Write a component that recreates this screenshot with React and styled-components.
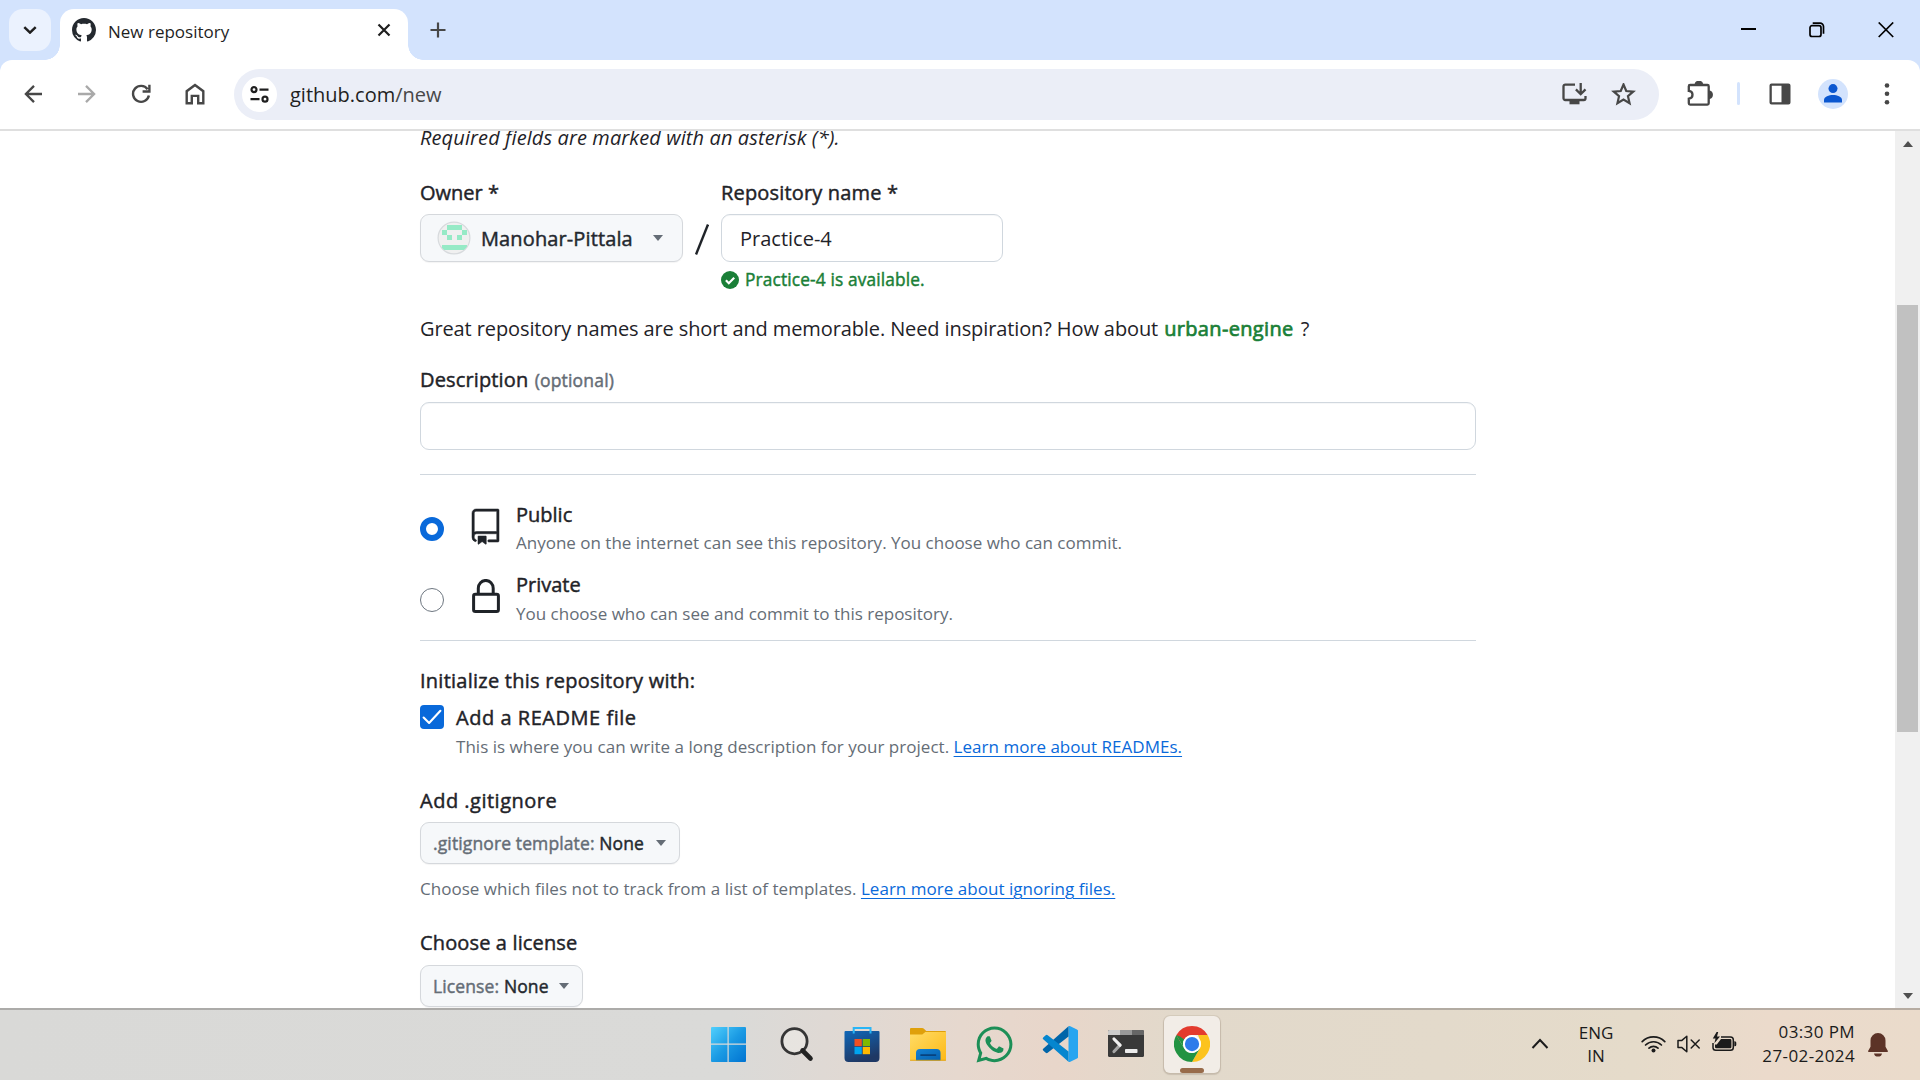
import React from "react";
import styled, { createGlobalStyle, css } from "styled-components";
import { FaWhatsapp } from "react-icons/fa";

const GlobalStyle = createGlobalStyle`
  * { box-sizing: border-box; }
  body {
    margin: 0;
    overflow: hidden;
    background: #fff;
    font-family: "Open Sans", "Noto Sans", sans-serif;
    color: #1f2328;
  }
  svg { display: block; flex: none; }
`;

const Screen = styled.div`
  width: 1920px;
  height: 1080px;
  display: flex;
  flex-direction: column;
  overflow: hidden;
`;

/* ---------- browser chrome ---------- */

const TabStrip = styled.header`
  height: 60px;
  flex: none;
  display: flex;
  align-items: flex-start;
  padding-left: 9px;
  background: #d3e3fd;
`;

const TabSearch = styled.button`
  width: 42px;
  height: 42px;
  margin: 9px 9px 0 0;
  padding: 0;
  border: 0;
  border-radius: 14px;
  background: #ebf2fe;
  display: flex;
  align-items: center;
  justify-content: center;
`;

const Tab = styled.div`
  position: relative;
  width: 348px;
  height: 51px;
  margin-top: 9px;
  padding: 0 17px 9px 12px;
  display: flex;
  align-items: center;
  background: #fff;
  border-radius: 14px 14px 0 0;

  &::before,
  &::after {
    content: "";
    position: absolute;
    bottom: 0;
    width: 15px;
    height: 15px;
  }
  &::before {
    left: -15px;
    background: radial-gradient(circle at 0 0, transparent 14.5px, #fff 15px);
  }
  &::after {
    right: -15px;
    background: radial-gradient(circle at 100% 0, transparent 14.5px, #fff 15px);
  }
`;

const TabTitle = styled.span`
  flex: 1;
  margin-left: 12px;
  padding-top: 4px;
  font-size: 17px;
  line-height: 24px;
  color: #1f1f1f;
`;

const NewTab = styled.div`
  margin: 22px 0 0 22px;
`;

const WindowButtons = styled.div`
  margin-left: auto;
  height: 60px;
  display: flex;
`;

const WindowButton = styled.div`
  width: ${(p) => p.$w}px;
  padding-top: 22px;
  display: flex;
  justify-content: center;
`;

const ToolbarBack = styled.div`
  flex: none;
  background: #d3e3fd;
`;

const Toolbar = styled.div`
  height: 71px;
  padding: 0 5px 2px 6px;
  display: flex;
  align-items: center;
  background: #fff;
  border-bottom: 2px solid #dfdfdf;
  border-radius: 12px 12px 0 0;
`;

const ToolButton = styled.div`
  width: ${(p) => p.$w || 54}px;
  height: 42px;
  display: flex;
  align-items: center;
  justify-content: center;
`;

const Omnibox = styled.div`
  width: 1425px;
  height: 51px;
  margin: 2px 14px 0 12px;
  padding: 0 23px 0 8px;
  display: flex;
  align-items: center;
  border-radius: 26px;
  background: #ebeef7;
`;

const SiteInfo = styled.div`
  width: 35px;
  height: 35px;
  border-radius: 50%;
  background: #fff;
  display: flex;
  align-items: center;
  justify-content: center;
`;

const Url = styled.span`
  flex: 1;
  margin-left: 13px;
  font-size: 20px;
  line-height: 30px;
  color: #1f1f1f;
  span { color: #474747; }
`;

const OmniActions = styled.div`
  display: flex;
  gap: 24px;
`;

const Separator = styled.div`
  width: 3px;
  height: 23px;
  margin: 0 20px 0 10px;
  border-radius: 2px;
  background: #d3e3fd;
`;

const Profile = styled.div`
  width: 30px;
  height: 30px;
  margin: 0 13px 0 18px;
  border-radius: 50%;
  background: #d3e3fd;
  display: flex;
  align-items: center;
  justify-content: center;
`;

/* ---------- page ---------- */

const Viewport = styled.div`
  height: 877px;
  flex: none;
  display: flex;
  overflow: hidden;
`;

const Page = styled.main`
  flex: 1;
  padding-left: 420px;
`;

const Form = styled.form`
  width: 1056px;
  margin-top: -8px;
  display: flex;
  flex-direction: column;
  align-items: flex-start;
`;

const medium = css`
  -webkit-text-stroke: 0.45px currentColor;
`;

const Line = styled.div`
  height: 30px;
  margin-top: ${(p) => p.$top || 0}px;
  font-size: 20px;
  line-height: 30px;
  white-space: pre;
  letter-spacing: ${(p) => p.$ls || 0}px;
  font-style: ${(p) => (p.$italic ? "italic" : "normal")};
  ${(p) => p.$strong && medium}
`;

const Caption = styled.div`
  height: 24px;
  margin-top: ${(p) => p.$top || 0}px;
  font-size: 17px;
  line-height: 24px;
  white-space: pre;
  color: #656d76;
  letter-spacing: ${(p) => p.$ls || 0}px;
`;

const Link = styled.a`
  color: #0969da;
  text-decoration: underline;
  text-decoration-thickness: 1px;
  text-underline-offset: 3px;
`;

const Optional = styled.span`
  margin-left: 1px;
  font-size: 17.5px;
  color: #656d76;
  letter-spacing: 0.18px;
`;

const Suggestion = styled.span`
  margin: 0 2px 0 1px;
  color: #1a7f37;
  letter-spacing: 0.33px;
  -webkit-text-stroke: 0.7px currentColor;
`;

const FieldRow = styled.div`
  margin-top: 25px;
  display: flex;
  align-items: flex-start;
`;

const Field = styled.div`
  display: flex;
  flex-direction: column;
  align-items: flex-start;
`;

const Slash = styled.svg`
  width: 14px;
  height: 31px;
  margin: 46px 12px 0;
`;

const SelectButton = styled.div`
  width: ${(p) => p.$w}px;
  height: ${(p) => (p.$large ? 48 : 42)}px;
  margin-top: ${(p) => p.$top || 6}px;
  padding: 0 ${(p) => (p.$large ? 19 : 13)}px 0 ${(p) => (p.$large ? 16 : 12)}px;
  display: flex;
  align-items: center;
  justify-content: space-between;
  border: 1px solid #d5d8dc;
  border-radius: 9px;
  background: #f6f8fa;
  box-shadow: 0 1px 1px rgba(31, 35, 40, 0.05);
`;

const SelectText = styled.span`
  flex: 1;
  font-size: ${(p) => (p.$large ? 20 : 17.5)}px;
  margin-left: ${(p) => (p.$large ? 10 : 0)}px;
  padding-top: ${(p) => (p.$large ? 2 : 0)}px;
  line-height: 30px;
  color: ${(p) => (p.$large ? "#24292f" : "#656d76")};
  letter-spacing: 0.12px;
  white-space: nowrap;
  ${medium}
  b {
    font-weight: 400;
    color: #24292f;
  }
`;

const Caret = styled.span`
  border: 5.5px solid transparent;
  border-top: 6px solid #656d76;
  border-bottom: 0;
`;

const Input = styled.div`
  width: ${(p) => p.$w}px;
  height: 48px;
  margin-top: ${(p) => p.$top}px;
  padding-left: 18px;
  border: 1px solid #d0d7de;
  border-radius: 9px;
  box-shadow: inset 0 1px 0 rgba(208, 215, 222, 0.2);
  font-size: 20px;
  line-height: 48px;
`;

const Available = styled.div`
  height: 24px;
  margin-top: 6px;
  display: flex;
  align-items: center;
  gap: 6px;
  font-size: 17.3px;
  line-height: 24px;
  color: #1a7f37;
  letter-spacing: 0.15px;
  ${medium}
`;

const Rule = styled.div`
  width: 1056px;
  height: 1px;
  margin-top: ${(p) => p.$top}px;
  background: #d0d7de;
`;

const Choice = styled.label`
  height: 58px;
  margin-top: ${(p) => p.$top}px;
  display: flex;
  align-items: flex-start;
`;

const Radio = styled.span`
  width: 24px;
  height: 24px;
  margin: ${(p) => (p.$on ? 17 : 18)}px 28px 0 0;
  border-radius: 50%;
  background: #fff;
  border: ${(p) => (p.$on ? "6px solid #0969da" : "1px solid #6e7781")};
`;

const ChoiceIcon = styled.span`
  width: 28px;
  margin: ${(p) => p.$top}px 16px 0 0;
`;

const CheckRow = styled.label`
  margin-top: 7px;
  display: flex;
  align-items: flex-start;
  gap: 12px;
`;

const Checkbox = styled.span`
  width: 24px;
  height: 24px;
  margin-top: 2px;
  border-radius: 4px;
  background: #0969da;
`;

const Scrollbar = styled.aside`
  width: 25px;
  display: flex;
  flex-direction: column;
  align-items: center;
  background: #f0f0f0;
`;

const ScrollArrow = styled.span`
  margin: ${(p) => (p.$up ? "10px 0 0" : "auto 0 9px")};
  border: 5.5px solid transparent;
  ${(p) => (p.$up ? "border-top: 0; border-bottom: 6px solid #505050;" : "border-bottom: 0; border-top: 6px solid #505050;")}
`;

const ScrollThumb = styled.span`
  width: 21px;
  height: 427px;
  margin-top: 158px;
  background: #c1c1c1;
`;

/* ---------- taskbar ---------- */

const Taskbar = styled.footer`
  height: 72px;
  flex: none;
  display: flex;
  border-top: 2px solid rgba(110, 108, 105, 0.42);
  background-clip: border-box;
  background-origin: border-box;
  background-image: linear-gradient(
    94deg,
    #d9d9d7 0%,
    #dadad8 38%,
    #dfd9d4 43%,
    #e6d8ce 50%,
    #e8d6ca 55%,
    #e2d9cb 61%,
    #e3dacb 75%,
    #e5dbca 85%,
    #ebdacb 92%,
    #eadbcb 100%
  );
`;

const Apps = styled.nav`
  padding: 16px 0 0 711px;
  display: flex;
  gap: 30px;
`;

const App36 = styled.div`
  width: 36px;
  height: 36px;
  color: ${(p) => p.$color || "inherit"};

  &:first-child { margin-right: 1px; }
`;

const ActiveApp = styled.div`
  width: 56px;
  height: 57px;
  margin: -10px 0 0 -10px;
  padding-top: 10px;
  display: flex;
  flex-direction: column;
  align-items: center;
  justify-content: space-between;
  border-radius: 6px;
  background: #f2ede7;
  box-shadow: 0 0 0 1px rgba(190, 175, 160, 0.3), 0 1px 1px 1px rgba(150, 135, 120, 0.3);
`;

const ActiveMark = styled.span`
  width: 24px;
  height: 5px;
  border-radius: 3px;
  background: #986b4a;
`;

const Tray = styled.div`
  margin-left: auto;
  padding-right: 32px;
  display: flex;
  color: #1b1b1b;
`;

const TrayIcon = styled.div`
  margin: ${(p) => p.$top}px ${(p) => p.$right}px 0 0;
`;

const TrayText = styled.div`
  width: ${(p) => p.$w}px;
  margin: ${(p) => p.$top}px ${(p) => p.$right}px 0 0;
  font-size: 17px;
  line-height: ${(p) => p.$lh}px;
  letter-spacing: ${(p) => p.$ls || 0}px;
  text-align: ${(p) => p.$align};
  white-space: nowrap;
`;

/* ---------- drawings ---------- */

const Octocat = () => (
  <svg width="24" height="24" viewBox="0 0 16 16" fill="#24292f">
    <path d="M8 0c4.42 0 8 3.58 8 8a8.013 8.013 0 0 1-5.45 7.59c-.4.08-.55-.17-.55-.38 0-.27.01-1.13.01-2.2 0-.75-.25-1.23-.54-1.48 1.78-.2 3.65-.88 3.65-3.95 0-.88-.31-1.59-.82-2.15.08-.2.36-1.02-.08-2.12 0 0-.67-.22-2.2.82-.64-.18-1.32-.27-2-.27-.68 0-1.36.09-2 .27-1.53-1.03-2.2-.82-2.2-.82-.44 1.1-.16 1.92-.08 2.12-.51.56-.82 1.28-.82 2.15 0 3.06 1.86 3.75 3.64 3.95-.23.2-.44.55-.51 1.07-.46.21-1.61.55-2.33-.66-.15-.24-.6-.83-1.23-.82-.67.01-.27.38.01.53.34.19.73.9.82 1.13.16.45.68 1.31 2.69.94 0 .67.01 1.3.01 1.49 0 .21-.15.45-.55.38A7.995 7.995 0 0 1 0 8c0-4.42 3.58-8 8-8Z" />
  </svg>
);

const Arrow = ({ color, flip }) => (
  <svg width="18" height="18" viewBox="0 0 18 18" fill="none" stroke={color} strokeWidth="2.3">
    <path d={flip ? "M0 9h16M8 .9 16.1 9 8 17.1" : "M18 9H2M10 .9 1.9 9l8.1 8.1"} />
  </svg>
);

const Reload = () => (
  <svg width="20" height="20" viewBox="0 0 20 20" fill="none" stroke="#474747" strokeWidth="2.4">
    <path d="M16.6 5.2A8 8 0 1 0 17.9 11.5M18.4.8v6.7h-6.8" />
  </svg>
);

const Home = () => (
  <svg width="20" height="22" viewBox="0 0 20 22" fill="none" stroke="#474747" strokeWidth="2.4">
    <path d="M1.7 20.3V8.2L10 2l8.3 6.2v12.1h-5.1v-7.4H6.8v7.4Z" />
  </svg>
);

const Tune = () => (
  <svg width="19" height="17" viewBox="0 0 19 17" fill="none" stroke="#1f1f1f" strokeWidth="2.2">
    <circle cx="4" cy="3.6" r="2.5" />
    <path d="M9.5 3.6h9M.5 13.2h9" />
    <circle cx="15" cy="13.2" r="2.5" />
  </svg>
);

const Install = () => (
  <svg width="25" height="22" viewBox="0 0 25 22" fill="none" stroke="#474747" strokeWidth="2.3">
    <path d="M13 1.6H3.2a1.7 1.7 0 0 0-1.7 1.7v12A1.7 1.7 0 0 0 3.2 17h18.6a1.7 1.7 0 0 0 1.7-1.7V13" />
    <path d="M18.7 0v10.5M13.9 6.4l4.8 4.8 4.8-4.8" />
    <path d="M7.5 19.500h10" strokeWidth="3.6" />
  </svg>
);

const Star = () => (
  <svg width="25" height="24" viewBox="0 1.5 25 24" fill="none" stroke="#474747" strokeWidth="2.2">
    <path d="m12.500 3 2.750 6.500 7 .6-5.300 4.600 1.600 6.900-6.050-3.650L6.450 21.600l1.600-6.900-5.300-4.600 7-.6Z" />
  </svg>
);

const Puzzle = () => (
  <svg width="26" height="26" viewBox="0 0.5 26 26" fill="none" stroke="#474747" strokeWidth="2.3">
    <path d="M1.800 5.800a1.300 1.300 0 0 1 1.300-1.300h17.300a1.300 1.300 0 0 1 1.300 1.300v17a1.300 1.300 0 0 1-1.300 1.300H3.100a1.300 1.300 0 0 1-1.300-1.300v-4.600c2.600-.3 3.700-2 3.700-3.900s-1.100-3.600-3.700-3.900Z" />
    <path d="M8.700 3.800a3.300 3.300 0 0 1 6.400 0ZM22.300 11.100a3.300 3.300 0 0 1 0 6.400Z" fill="#474747" />
  </svg>
);

const SidePanel = () => (
  <svg width="22" height="22" viewBox="0 0 22 22">
    <path fill="#474747" fillRule="evenodd" d="M2.500.5h17a2 2 0 0 1 2 2v17a2 2 0 0 1-2 2h-17a2 2 0 0 1-2-2v-17a2 2 0 0 1 2-2ZM2.800 2.800v16.400h9.700V2.800Z" />
  </svg>
);

const Person = () => (
  <svg width="18" height="19" viewBox="0 0 18 19" fill="#0b57d0">
    <circle cx="9" cy="4.6" r="4.5" />
    <path d="M0 18.500v-2.400c0-3.200 5-5 9-5s9 1.800 9 5v2.400Z" />
  </svg>
);

const Dots = () => (
  <svg width="6" height="22" viewBox="0 0 6 22" fill="#474747">
    <circle cx="3" cy="2.5" r="2.3" />
    <circle cx="3" cy="10.8" r="2.3" />
    <circle cx="3" cy="19.2" r="2.3" />
  </svg>
);

const cells = [[1, 0], [2, 0], [3, 0], [0, 1], [4, 1], [1, 2], [3, 2], [0, 4], [1, 4], [2, 4], [3, 4], [4, 4]];

const Identicon = () => (
  <svg width="34" height="34" viewBox="0 0 34 34">
    <clipPath id="avatar"><circle cx="17" cy="17" r="15.5" /></clipPath>
    <circle cx="17" cy="17" r="15.9" fill="#f0f0f0" stroke="#d7dadd" strokeWidth="1.2" />
    <g clipPath="url(#avatar)" fill="#96eac6" shapeRendering="crispEdges">
      {cells.map(([x, y]) => (
        <rect key={`${x}-${y}`} x={4.5 + x * 5} y={4 + y * 5} width="5" height="5" />
      ))}
    </g>
  </svg>
);

const CheckCircle = () => (
  <svg width="18" height="18" viewBox="0 0 18 18">
    <circle cx="9" cy="9" r="9" fill="#1a7f37" />
    <path d="m4.900 9.300 2.900 2.900 5.400-5.500" fill="none" stroke="#fff" strokeWidth="2.2" />
  </svg>
);

const Repo = () => (
  <svg width="36" height="36" viewBox="3 0 24 24" fill="#1f2328" stroke="#1f2328" strokeWidth="0.35" overflow="visible">
    <path d="M3 2.750A2.750 2.750 0 0 1 5.750 0h14.500a.750.750 0 0 1 .750.750v20.500a.750.750 0 0 1-.750.750h-6a.750.750 0 0 1 0-1.500h5.250v-4H6A1.500 1.500 0 0 0 4.500 18v.750c0 .716.430 1.334 1.050 1.605a.750.750 0 0 1-.6 1.374A3.251 3.251 0 0 1 3 18.750ZM19.500 1.500H5.750c-.690 0-1.250.560-1.250 1.250v12.651A2.989 2.989 0 0 1 6 15h13.500Z" />
    <path d="M7 18.250a.250.250 0 0 1 .250-.250h5a.250.250 0 0 1 .250.250v5.010a.250.250 0 0 1-.397.201l-2.206-1.604a.250.250 0 0 0-.294 0L7.397 23.460a.250.250 0 0 1-.397-.200v-5.010Z" />
  </svg>
);

const Lock = () => (
  <svg width="28" height="34" viewBox="0 0 28 34" fill="none" stroke="#1f2328" strokeWidth="3">
    <rect x="1.6" y="15.2" width="24.800" height="17.300" rx="1.8" />
    <path d="M6.300 15V9.200a7.400 7.700 0 0 1 14.900 0V15" />
  </svg>
);

const Tick = () => (
  <svg width="24" height="24" viewBox="0 0 24 24" fill="none" stroke="#fff" strokeWidth="2.1">
    <path d="m3.600 12.600 5.500 5.400L20.400 5.800" strokeLinecap="round" strokeLinejoin="round" />
  </svg>
);

const Windows = () => (
  <svg width="36" height="36" viewBox="0.5 0 36 36">
    <defs>
      <linearGradient id="win" x1="0" y1="0" x2="1" y2="1">
        <stop offset="0" stopColor="#51d0fd" />
        <stop offset=".5" stopColor="#1b9be4" />
        <stop offset="1" stopColor="#0073d1" />
      </linearGradient>
    </defs>
    <path fill="url(#win)" d="M1.500 1H17v16.500H.5V2a1 1 0 0 1 1-1ZM18.200 1H34.500a1 1 0 0 1 1 1v15.500H18.200ZM.5 18.700H17v17.300H1.500a1 1 0 0 1-1-1ZM18.200 18.700h17.300V35a1 1 0 0 1-1 1H18.200Z" />
  </svg>
);

const Search = () => (
  <svg width="36" height="36" viewBox="0 0 36 36" fill="none">
    <circle cx="16.5" cy="15.2" r="12.6" fill="#f4f1ee" fillOpacity=".45" stroke="#353535" strokeWidth="2.8" />
    <path d="m24.500 24.500 8 8" stroke="#222" strokeWidth="4.6" strokeLinecap="round" />
  </svg>
);

const Store = () => (
  <svg width="36" height="36" viewBox="0 0 36 36">
    <defs>
      <linearGradient id="store" x1="0" y1="0" x2=".4" y2="1">
        <stop offset="0" stopColor="#0f67b8" />
        <stop offset="1" stopColor="#1f3864" />
      </linearGradient>
    </defs>
    <path d="M.5 6a1 1 0 0 1 1-1h33a1 1 0 0 1 1 1v26a4 4 0 0 1-4 4h-27a4 4 0 0 1-4-4Z" fill="url(#store)" />
    <path d="M9.700 7.500V2h16.800v5.500" fill="none" stroke="#29b5f6" strokeWidth="2" />
    <path fill="#f25022" d="M10.500 13h7.300v7.200h-7.300z" />
    <path fill="#7fba00" d="M18.700 13H26v7.200h-7.300z" />
    <path fill="#00a4ef" d="M10.500 21h7.300v7.200h-7.300z" />
    <path fill="#ffb900" d="M18.700 21H26v7.200h-7.300z" />
  </svg>
);

const Folder = () => (
  <svg width="36" height="36" viewBox="0 0 36 36">
    <defs>
      <linearGradient id="folder" x1="0" y1="0" x2="1" y2="1">
        <stop offset="0" stopColor="#ffdc67" />
        <stop offset="1" stopColor="#fdb915" />
      </linearGradient>
      <linearGradient id="folderBlue" x1="0" y1="0" x2="1" y2="1">
        <stop offset="0" stopColor="#1482d4" />
        <stop offset="1" stopColor="#0560ae" />
      </linearGradient>
    </defs>
    <path d="M0 3a1 1 0 0 1 1-1h11a3 3 0 0 1 2.200 1l2 2H35a1 1 0 0 1 1 1v8H0Z" fill="#dfa00b" />
    <path d="M0 8.500h12.300l3-2.500H36v27.500a1 1 0 0 1-1 1H1a1 1 0 0 1-1-1Z" fill="url(#folder)" />
    <path d="M6 34.500V27a4 4 0 0 1 4-4h16.500a4 4 0 0 1 4 4v7.500Z" fill="url(#folderBlue)" />
    <path d="M11 29.100h14.500" stroke="#07427e" strokeWidth="1.7" strokeLinecap="round" />
    <path d="M0 34.300h36" stroke="#dfa00b" strokeWidth=".8" />
  </svg>
);

const WhatsApp = styled(FaWhatsapp)`
  width: 41px;
  height: 41px;
  margin: -2.5px;
`;

const VSCode = () => (
  <svg width="36" height="36" viewBox="0 0 36 36">
    <path d="M26.500.3 36 4.800v26.400l-9.500 4.500Z" fill="#27a5f0" />
    <path d="M26.500.3 1.200 22.700a1.200 1.200 0 0 0 0 1.800l2.500 2.200a1.600 1.600 0 0 0 2 .1L26.500 10.500Z" fill="#0065a9" />
    <path d="M26.500 35.700 1.200 13.300a1.200 1.200 0 0 1 0-1.800l2.500-2.200a1.600 1.600 0 0 1 2-.1l20.800 16.300Z" fill="#0586cf" />
    <path d="M26.500.3a2 2 0 0 1 1.800 0L35 3.500a2 2 0 0 1 1 1.800v25.400a2 2 0 0 1-1 1.800l-6.700 3.200a2 2 0 0 1-1.800 0c.5-.2.700-.7.700-1.300V1.600c0-.6-.2-1.100-.7-1.300Z" fill="#27a5f0" />
  </svg>
);

const Terminal = () => (
  <svg width="36" height="36" viewBox="0 0 36 36">
    <rect y="4" width="36" height="27" rx="1.5" fill="#393939" />
    <path d="M0 9V5.500A1.500 1.500 0 0 1 1.500 4H12v5Z" fill="#cbcbcb" />
    <path d="M12 4h12v5H12z" fill="#999" />
    <path d="M24 4h10.500A1.500 1.500 0 0 1 36 5.500V9H24Z" fill="#666" />
    <path d="m12 19.200-6 6.300" fill="none" stroke="#a5a5a5" strokeWidth="3.2" strokeLinecap="round" />
    <path d="m6 13 6 6.200" fill="none" stroke="#f0f0f0" strokeWidth="3.2" strokeLinecap="round" />
    <rect x="17" y="23" width="12.5" height="4" rx=".8" fill="#ececec" />
  </svg>
);

const Chrome = () => (
  <svg width="36" height="36" viewBox="0 0 48 48">
    <path d="M44.800 12A24 24 0 0 1 24 48l10.400-18A12 12 0 0 0 34.400 18L32 12Z" fill="#fcc31e" />
    <path d="M24 48A24 24 0 0 1 3.200 12l10.400 18A12 12 0 0 0 27 35.600L34.400 30Z" fill="#229342" />
    <path d="M3.200 12A24 24 0 0 1 24 0a24 24 0 0 1 20.800 12H24A12 12 0 0 0 13.600 18L8 20.300Z" fill="#e33b2e" />
    <path d="M3.200 12 13.600 30A12 12 0 0 1 13.600 18L8 14Z" fill="#229342" />
    <circle cx="24" cy="24" r="12" fill="#fff" />
    <circle cx="24" cy="24" r="9.5" fill="#2f7bea" />
  </svg>
);

const Wifi = () => (
  <svg width="25" height="18" viewBox="0 0 25 18" fill="none" stroke="#1b1b1b" strokeWidth="1.7" strokeLinecap="round">
    <path d="M1.200 6.600a16 16 0 0 1 22.600 0M4.600 10a11.200 11.200 0 0 1 15.800 0M8 13.200a6.400 6.400 0 0 1 9 0" />
    <circle cx="12.5" cy="15.6" r="2" fill="#1b1b1b" stroke="none" />
  </svg>
);

const Muted = () => (
  <svg width="24" height="18" viewBox="0 0 24 18" fill="none" stroke="#1b1b1b" strokeWidth="1.5" strokeLinejoin="round">
    <path d="M1 5.600h3.600l5.200-4.400v15.600l-5.200-4.400H1Z" />
    <path d="m14.200 5 8 8M22.200 5l-8 8" strokeLinecap="round" />
  </svg>
);

const Battery = () => (
  <svg width="25" height="20" viewBox="0 0 25 20">
    <path d="M9 5h9.500a2.800 2.800 0 0 1 2.800 2.800v7.600a2.800 2.800 0 0 1-2.800 2.800H3.800A2.800 2.800 0 0 1 1 15.400V11" fill="none" stroke="#1b1b1b" strokeWidth="1.5" />
    <path d="M9 7h9.200a1.200 1.200 0 0 1 1.200 1.200V15a1.200 1.200 0 0 1-1.200 1.200H4.200A1.200 1.200 0 0 1 3 15v-2.500h1.800Z" fill="#1b1b1b" />
    <path d="M22.300 9.200h.5a1.500 1.500 0 0 1 1.500 1.500v2a1.500 1.500 0 0 1-1.500 1.500h-.5Z" fill="#1b1b1b" />
    <path d="M4.600 0 .8 6.600h2.700L2.400 11.200 8 4.500H5L6.200 0Z" fill="#1b1b1b" />
  </svg>
);

const Bell = () => (
  <svg width="20" height="24" viewBox="0 0 20 24" fill="#5c3327">
    <path d="M10 0a7.500 7.500 0 0 1 7.500 7.500v6.300l2.400 4.100c.2.600-.1 1-.7 1H.8c-.6 0-.9-.4-.7-1l2.400-4.100V7.500A7.500 7.500 0 0 1 10 0ZM6 20.400h8a4.100 4.100 0 0 1-8 0Z" />
  </svg>
);

export default function App() {
  return (
    <Screen>
      <GlobalStyle />
      <TabStrip>
        <TabSearch>
          <svg width="14" height="8" viewBox="0 0 14 8" fill="none" stroke="#1f1f1f" strokeWidth="2.5">
            <path d="m1.300 1.200 5.700 5.400 5.700-5.400" />
          </svg>
        </TabSearch>
        <Tab>
          <Octocat />
          <TabTitle>New repository</TabTitle>
          <svg width="14" height="14" viewBox="0 0 14 14" fill="none" stroke="#1f1f1f" strokeWidth="2.2">
            <path d="m1.500 1.500 11 11M12.500 1.500l-11 11" />
          </svg>
        </Tab>
        <NewTab>
          <svg width="16" height="16" viewBox="0 0 16 16" stroke="#474747" strokeWidth="2.2">
            <path d="M8 .5v15M.5 8h15" />
          </svg>
        </NewTab>
        <WindowButtons>
          <WindowButton $w={68}>
            <svg width="16" height="16"><path d="M0 6h15v2H0z" fill="#000" /></svg>
          </WindowButton>
          <WindowButton $w={68}>
            <svg width="16" height="16" viewBox="0 0 16 16" fill="none" stroke="#000" strokeWidth="1.7">
              <rect x="1" y="3.7" width="11" height="10.8" rx="2" />
              <path d="M3.700 1.100H11a3.500 3.500 0 0 1 3.500 3.500v7.200" />
            </svg>
          </WindowButton>
          <WindowButton $w={69}>
            <svg width="16" height="16" viewBox="0 0 16 16" stroke="#000" strokeWidth="1.7">
              <path d="m.7.500 14.500 14.500M15.200.5.700 15" />
            </svg>
          </WindowButton>
        </WindowButtons>
      </TabStrip>

      <ToolbarBack>
        <Toolbar>
          <ToolButton><Arrow color="#474747" /></ToolButton>
          <ToolButton><Arrow color="#a9a9a9" flip /></ToolButton>
          <ToolButton><Reload /></ToolButton>
          <ToolButton><Home /></ToolButton>
          <Omnibox>
            <SiteInfo><Tune /></SiteInfo>
            <Url>github.com<span>/new</span></Url>
            <OmniActions>
              <Install />
              <Star />
            </OmniActions>
          </Omnibox>
          <ToolButton><Puzzle /></ToolButton>
          <Separator />
          <ToolButton $w={40}><SidePanel /></ToolButton>
          <Profile><Person /></Profile>
          <ToolButton $w={52}><Dots /></ToolButton>
        </Toolbar>
      </ToolbarBack>

      <Viewport>
        <Page>
          <Form>
            <Line $italic $ls={0.11}>Required fields are marked with an asterisk (*).</Line>

            <FieldRow>
              <Field>
                <Line $strong>Owner *</Line>
                <SelectButton $w={263} $large>
                  <Identicon />
                  <SelectText $large>Manohar-Pittala</SelectText>
                  <Caret />
                </SelectButton>
              </Field>
              <Slash viewBox="0 0 14 31"><path d="M1 30.500 13 .5" stroke="#1f2328" strokeWidth="2.4" /></Slash>
              <Field>
                <Line $strong $ls={0.17}>Repository name *</Line>
                <Input $w={282} $top={6}>Practice-4</Input>
                <Available><CheckCircle />Practice-4 is available.</Available>
              </Field>
            </FieldRow>

            <Line $top={22} $ls={-0.11}>
              Great repository names are short and memorable. Need inspiration? How about <Suggestion>urban-engine</Suggestion> ?
            </Line>

            <Line $top={21} $strong $ls={0.14}>Description <Optional>(optional)</Optional></Line>
            <Input $w={1056} $top={7} />
            <Rule $top={24} />

            <Choice $top={25}>
              <Radio $on />
              <ChoiceIcon $top={9}><Repo /></ChoiceIcon>
              <Field>
                <Line $strong>Public</Line>
                <Caption $top={1}>Anyone on the internet can see this repository. You choose who can commit.</Caption>
              </Field>
            </Choice>
            <Choice $top={12}>
              <Radio />
              <ChoiceIcon $top={9}><Lock /></ChoiceIcon>
              <Field>
                <Line $strong>Private</Line>
                <Caption $top={2}>You choose who can see and commit to this repository.</Caption>
              </Field>
            </Choice>
            <Rule $top={12} />

            <Line $top={25} $strong $ls={0.25}>Initialize this repository with:</Line>
            <CheckRow>
              <Checkbox><Tick /></Checkbox>
              <Field>
                <Line $strong $ls={0.53}>Add a README file</Line>
                <Caption $top={2} $ls={0.025}>This is where you can write a long description for your project. <Link>Learn more about READMEs.</Link></Caption>
              </Field>
            </CheckRow>

            <Line $top={27} $strong $ls={0.5}>Add .gitignore</Line>
            <SelectButton $w={260}>
              <SelectText>.gitignore template: <b>None</b></SelectText>
              <Caret />
            </SelectButton>
            <Caption $top={13} $ls={0.03}>Choose which files not to track from a list of templates. <Link>Learn more about ignoring files.</Link></Caption>

            <Line $top={27} $strong $ls={0.14}>Choose a license</Line>
            <SelectButton $w={163} $top={7}>
              <SelectText>License: <b>None</b></SelectText>
              <Caret />
            </SelectButton>
          </Form>
        </Page>
        <Scrollbar>
          <ScrollArrow $up />
          <ScrollThumb />
          <ScrollArrow />
        </Scrollbar>
      </Viewport>

      <Taskbar>
        <Apps>
          <App36><Windows /></App36>
          <App36><Search /></App36>
          <App36><Store /></App36>
          <App36><Folder /></App36>
          <App36 $color="#1c8f57"><WhatsApp /></App36>
          <App36><VSCode /></App36>
          <App36><Terminal /></App36>
          <ActiveApp>
            <Chrome />
            <ActiveMark />
          </ActiveApp>
        </Apps>
        <Tray>
          <TrayIcon $top={28} $right={29}>
            <svg width="18" height="12" viewBox="0 0 18 12" fill="none" stroke="#1b1b1b" strokeWidth="2">
              <path d="m1.500 10 7.500-8 7.500 8" />
            </svg>
          </TrayIcon>
          <TrayText $w={36} $top={11} $right={27} $lh={23} $align="center">ENG<br />IN</TrayText>
          <TrayIcon $top={25} $right={11}><Wifi /></TrayIcon>
          <TrayIcon $top={25} $right={11}><Muted /></TrayIcon>
          <TrayIcon $top={22} $right={22}><Battery /></TrayIcon>
          <TrayText $w={96} $top={10} $right={13} $lh={24} $ls={0.4} $align="right">03:30 PM<br />27-02-2024</TrayText>
          <TrayIcon $top={23} $right={0}><Bell /></TrayIcon>
        </Tray>
      </Taskbar>
    </Screen>
  );
}
